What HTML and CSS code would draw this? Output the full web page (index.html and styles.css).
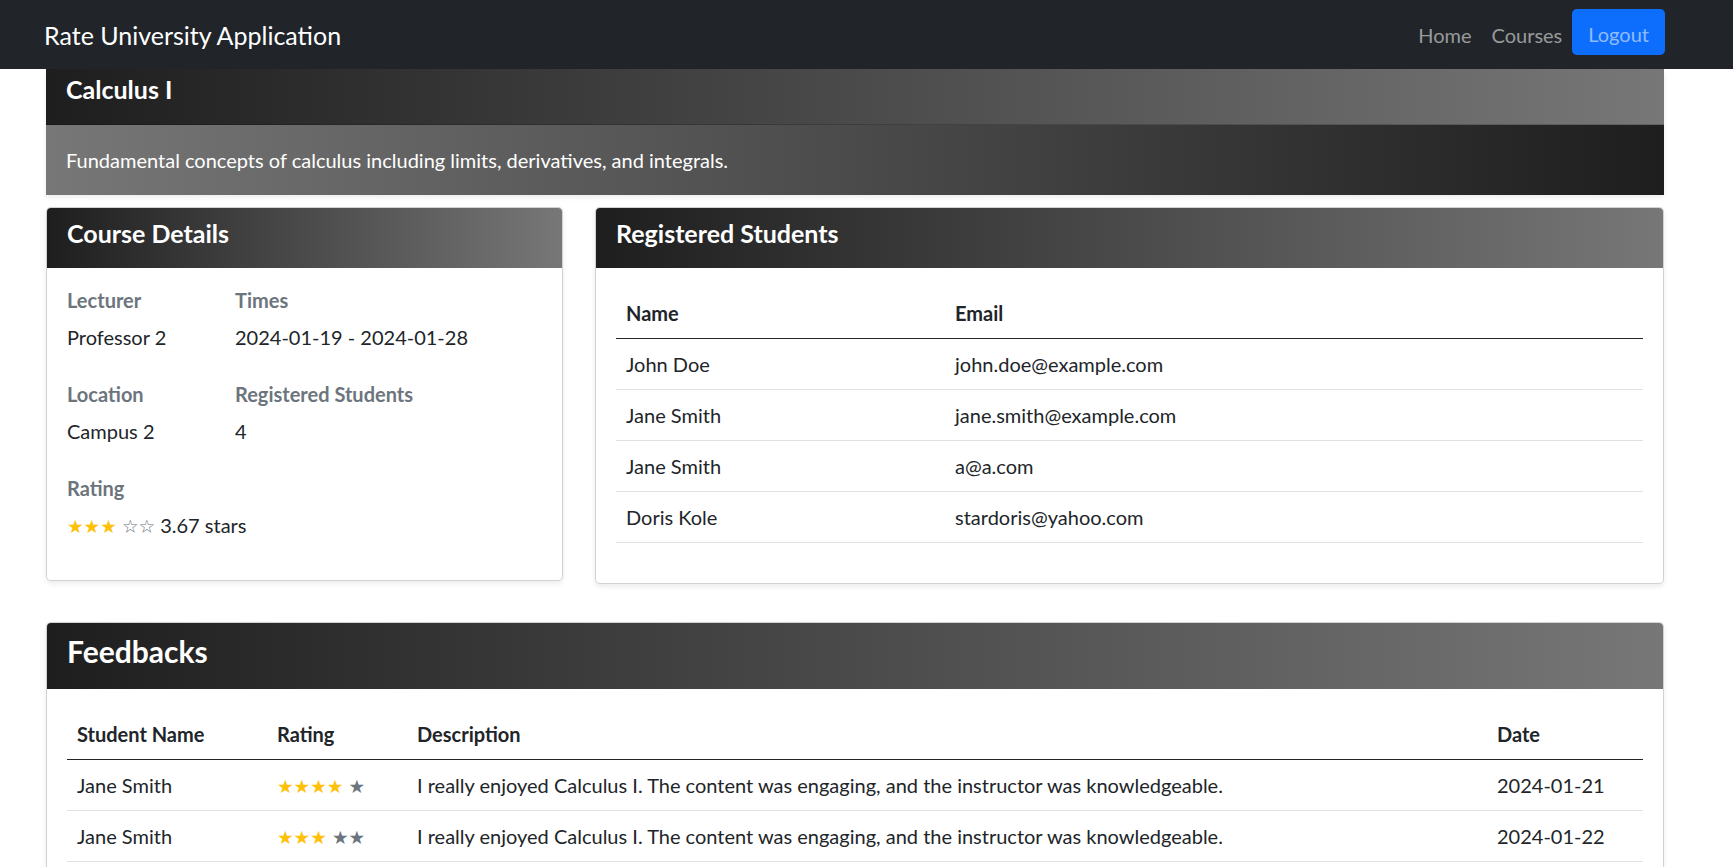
FILE: index.html
```html
<!DOCTYPE html>
<html lang="en">
<head>
<meta charset="utf-8">
<title>Rate University Application</title>
<link rel="stylesheet" href="styles.css">
</head>
<body>
<nav class="navbar">
  <a class="brand" href="#">Rate University Application</a>
  <ul class="nav-links">
    <li><a class="nav-link" href="#">Home</a></li>
    <li><a class="nav-link" href="#">Courses</a></li>
    <li><a class="nav-link logout" href="#">Logout</a></li>
  </ul>
</nav>
<main class="page">
  <section class="card hero">
    <div class="card-header hero-header"><h5 class="card-title">Calculus I</h5></div>
    <div class="hero-body"><p class="hero-text">Fundamental concepts of calculus including limits, derivatives, and integrals.</p></div>
  </section>

  <div class="info-row">
    <section class="card">
      <div class="card-header"><h5 class="card-title">Course Details</h5></div>
      <div class="card-body">
        <div class="detail-grid">
          <div class="detail-item">
            <h6 class="detail-label">Lecturer</h6>
            <p class="detail-value">Professor 2</p>
          </div>
          <div class="detail-item">
            <h6 class="detail-label">Times</h6>
            <p class="detail-value">2024-01-19 - 2024-01-28</p>
          </div>
          <div class="detail-item">
            <h6 class="detail-label">Location</h6>
            <p class="detail-value">Campus 2</p>
          </div>
          <div class="detail-item">
            <h6 class="detail-label">Registered Students</h6>
            <p class="detail-value">4</p>
          </div>
          <div class="detail-item wide">
            <h6 class="detail-label">Rating</h6>
            <p class="detail-value"><span class="stars gold">★★★</span> <span class="stars muted">☆☆</span> 3.67 stars</p>
          </div>
        </div>
      </div>
    </section>

    <section class="card">
      <div class="card-header"><h5 class="card-title">Registered Students</h5></div>
      <div class="card-body">
        <table class="table">
          <thead>
            <tr><th class="col-name">Name</th><th>Email</th></tr>
          </thead>
          <tbody>
            <tr><td>John Doe</td><td>john.doe@example.com</td></tr>
            <tr><td>Jane Smith</td><td>jane.smith@example.com</td></tr>
            <tr><td>Jane Smith</td><td>a@a.com</td></tr>
            <tr><td>Doris Kole</td><td>stardoris@yahoo.com</td></tr>
          </tbody>
        </table>
      </div>
    </section>
  </div>

  <section class="card feedbacks">
    <div class="card-header"><h4 class="card-title large">Feedbacks</h4></div>
    <div class="card-body">
      <table class="table">
        <thead>
          <tr>
            <th class="col-student">Student Name</th>
            <th class="col-rating">Rating</th>
            <th class="col-desc">Description</th>
            <th>Date</th>
          </tr>
        </thead>
        <tbody>
          <tr>
            <td>Jane Smith</td>
            <td><span class="stars gold">★★★★</span> <span class="stars muted">★</span></td>
            <td>I really enjoyed Calculus I. The content was engaging, and the instructor was knowledgeable.</td>
            <td>2024-01-21</td>
          </tr>
          <tr>
            <td>Jane Smith</td>
            <td><span class="stars gold">★★★</span> <span class="stars muted">★★</span></td>
            <td>I really enjoyed Calculus I. The content was engaging, and the instructor was knowledgeable.</td>
            <td>2024-01-22</td>
          </tr>
        </tbody>
      </table>
    </div>
  </section>
</main>
</body>
</html>
```

FILE: styles.css
```css
* { box-sizing: border-box; }

html, body { margin: 0; padding: 0; }

body {
  font-family: Lato, "Noto Sans", sans-serif;
  font-size: 20px;
  line-height: 30px;
  color: #212529;
  background: #fff;
}

a { text-decoration: none; }

.navbar {
  height: 69px;
  background: #212529;
  display: flex;
  align-items: center;
  justify-content: space-between;
  padding: 0 68px 0 44px;
}

.brand {
  color: #fff;
  font-size: 25px;
  line-height: 30px;
}

.nav-links {
  list-style: none;
  margin: 0;
  padding: 0;
  display: flex;
  align-items: center;
}

.nav-link {
  display: block;
  padding: 0 10px;
  color: rgba(255, 255, 255, 0.55);
  font-size: 20px;
  line-height: 30px;
}

.nav-link.logout {
  background: #0d6efd;
  border-radius: 5px;
  padding: 10px 16px 6px;
  margin-top: -5px;
}

.page {
  padding: 0 69px 0 46px;
}

.card {
  background: #fff;
  border: 1px solid rgba(0, 0, 0, 0.175);
  border-radius: 5px;
  box-shadow: 0 2.5px 5px rgba(0, 0, 0, 0.075);
  overflow: hidden;
}

.card-header {
  background: linear-gradient(to right, #1e1e1e, #777777);
  color: #fff;
  padding: 10px 20px;
}

.card-title {
  margin: 0 0 10px;
  font-size: 25px;
  line-height: 30px;
  font-weight: 700;
}

.card-title.large {
  font-size: 30px;
  line-height: 36px;
}

.card-body {
  padding: 20px;
}

.hero {
  border: none;
  border-radius: 0;
}

.hero-header {
  padding-top: 5px;
  border-bottom: 1px solid rgba(0, 0, 0, 0.175);
}

.hero-body {
  background: linear-gradient(to right, #777777, #1e1e1e);
  color: #fff;
  padding: 20px;
}

.hero-text { margin: 0; }

.info-row {
  display: grid;
  grid-template-columns: 517px 1fr;
  column-gap: 32px;
  align-items: start;
  margin-top: 12px;
}

.detail-grid {
  display: grid;
  grid-template-columns: 168px 1fr;
  row-gap: 10px;
}

.detail-item.wide { grid-column: 1 / -1; }

.detail-label {
  margin: 0 0 10px;
  font-size: 20px;
  line-height: 24px;
  font-weight: 700;
  color: #6c757d;
}

.detail-value {
  margin: 0 0 20px;
}

.stars {
  font-family: "DejaVu Sans", sans-serif;
  font-size: 18.5px;
  line-height: 20px;
}

.stars.gold { color: #ffc107; }
.stars.muted { color: #6c757d; }

.table {
  width: 100%;
  border-collapse: collapse;
  margin-bottom: 20px;
}

.table th,
.table td {
  padding: 10px;
  text-align: left;
  vertical-align: top;
  border-bottom: 1px solid #dee2e6;
}

.table th {
  font-weight: 700;
  border-bottom: 1px solid #212529;
}

.col-name { width: 329px; }

.feedbacks { margin-top: 38px; }

.col-student { width: 200px; }
.col-rating { width: 140px; }
.col-desc { width: 1080px; }
```
